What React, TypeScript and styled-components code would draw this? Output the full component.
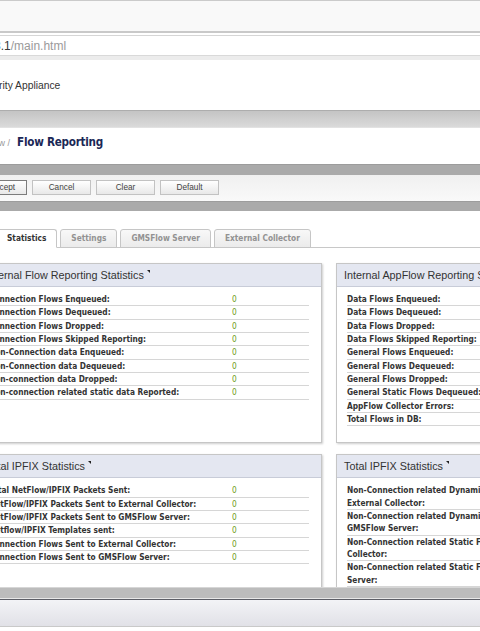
import React from "react";
import styled, { createGlobalStyle } from "styled-components";

interface Stat {
  label: string;
  value: string;
}

interface PanelData {
  title: string;
  stats: Array<Stat>;
}

const zeros = (labels: Array<string>): Array<Stat> =>
  labels.map(label => ({ label, value: "0" }));

const panels: Array<PanelData> = [
  {
    title: "Internal Flow Reporting Statistics",
    stats: zeros([
      "Connection Flows Enqueued:",
      "Connection Flows Dequeued:",
      "Connection Flows Dropped:",
      "Connection Flows Skipped Reporting:",
      "Non-Connection data Enqueued:",
      "Non-Connection data Dequeued:",
      "Non-connection data Dropped:",
      "Non-connection related static data Reported:"
    ])
  },
  {
    title: "Internal AppFlow Reporting Statistics",
    stats: zeros([
      "Data Flows Enqueued:",
      "Data Flows Dequeued:",
      "Data Flows Dropped:",
      "Data Flows Skipped Reporting:",
      "General Flows Enqueued:",
      "General Flows Dequeued:",
      "General Flows Dropped:",
      "General Static Flows Dequeued:",
      "AppFlow Collector Errors:",
      "Total Flows in DB:"
    ])
  },
  {
    title: "Total IPFIX Statistics",
    stats: zeros([
      "Total NetFlow/IPFIX Packets Sent:",
      "NetFlow/IPFIX Packets Sent to External Collector:",
      "NetFlow/IPFIX Packets Sent to GMSFlow Server:",
      "Netflow/IPFIX Templates sent:",
      "Connection Flows Sent to External Collector:",
      "Connection Flows Sent to GMSFlow Server:"
    ])
  },
  {
    title: "Total IPFIX Statistics",
    stats: zeros([
      "Non-Connection related Dynamic Flows Sent to\nExternal Collector:",
      "Non-Connection related Dynamic Flows Sent to\nGMSFlow Server:",
      "Non-Connection related Static Flows Sent to External\nCollector:",
      "Non-Connection related Static Flows Sent to GMSFlow\nServer:",
      "Non-Connection related Flows Sent to\nExternal Collector:"
    ])
  }
];

const tabs = ["Statistics", "Settings", "GMSFlow Server", "External Collector"];
const buttons = ["Accept", "Cancel", "Clear", "Default"];

const StatPanel = ({ title, stats }: PanelData) => (
  <Panel>
    <PanelHeader>
      {title}
      <Corner />
    </PanelHeader>
    <StatTable>
      {stats.map((s, i) => (
        <StatRow key={i}>
          <Label>{s.label}</Label>
          <Value>{s.value}</Value>
        </StatRow>
      ))}
    </StatTable>
  </Panel>
);

export default function App() {
  return (
    <>
      <GlobalStyle />
      <Viewport>
        <BrowserTop />
        <UrlBar>
          <UrlText>
            <Host>192.168.168.1</Host>
            <Path>/main.html</Path>
          </UrlText>
        </UrlBar>
        <AppHeader>
          <Product>Network Security Appliance</Product>
        </AppHeader>
        <NavBar />
        <TitleArea>
          <Crumb>AppFlow /</Crumb>
          <PageTitle>Flow Reporting</PageTitle>
        </TitleArea>
        <DarkBar $h={11} />
        <ButtonStrip>
          {buttons.map((b, i) => (
            <Button key={b} $primary={i === 0}>
              {b}
            </Button>
          ))}
        </ButtonStrip>
        <DarkBar $h={10} />
        <Content>
          <TabBar>
            {tabs.map((t, i) => (
              <Tab key={t} $active={i === 0}>
                {t}
              </Tab>
            ))}
          </TabBar>
          <PanelGrid>
            {panels.map((p, i) => (
              <StatPanel key={i} title={p.title} stats={p.stats} />
            ))}
          </PanelGrid>
        </Content>
        <GreyBand />
        <Footer />
      </Viewport>
    </>
  );
}

const GlobalStyle = createGlobalStyle`
  body {
    margin: 0;
    background: #fff;
    overflow: hidden;
  }
`;

const Viewport = styled.div`
  width: 480px;
  height: 631px;
  overflow: hidden;
  background: #fff;
  font-family: "Liberation Sans", Arial, sans-serif;
`;

const BrowserTop = styled.div`
  height: 30px;
  background: #f9f9f9;
  border-top: 1px solid #cbcbcb;
  border-bottom: 2px solid #c9c9c9;
  margin-bottom: 2px;
`;

const UrlBar = styled.div`
  height: 19px;
  border-top: 1px solid #d6d6d6;
  border-bottom: 1px solid #d9d9d9;
  display: flex;
  align-items: center;
  white-space: nowrap;
`;

const UrlText = styled.div`
  margin-left: -66px;
  font-size: 12px;
`;

const Host = styled.span`
  color: #3a3a3a;
`;

const Path = styled.span`
  color: #9a9a9a;
`;

const AppHeader = styled.div`
  height: 50px;
  border-top: 4px solid #ececec;
  display: flex;
  align-items: center;
  white-space: nowrap;
`;

const Product = styled.div`
  margin-left: -65px;
  font-size: 10.3px;
  color: #333;
`;

const NavBar = styled.div`
  height: 16px;
  border-top: 1px solid #adadad;
  border-bottom: 1px solid #e2e2e2;
  background: linear-gradient(#c4c4c4, #dadada);
`;

const TitleArea = styled.div`
  height: 29px;
  padding-top: 7px;
  margin-left: -30px;
  display: flex;
  align-items: baseline;
  white-space: nowrap;
  line-height: 14px;
`;

const Crumb = styled.span`
  font-size: 9px;
  color: #999;
  margin-right: 7px;
`;

const PageTitle = styled.span`
  font-family: "DejaVu Sans Condensed", "DejaVu Sans", sans-serif;
  font-weight: bold;
  font-size: 11.6px;
  letter-spacing: -0.25px;
  color: #1b2856;
`;

const DarkBar = styled.div<{ $h: number }>`
  height: ${p => p.$h - 1}px;
  border-top: 1px solid #9c9c9c;
  background: #aaaaaa;
`;

const ButtonStrip = styled.div`
  height: 21px;
  padding-top: 5px;
  margin-left: -22px;
  display: flex;
  gap: 5px;
  background: linear-gradient(#f0f0f0, #f9f9f9);
`;

const Button = styled.div<{ $primary: boolean }>`
  box-sizing: border-box;
  width: ${p => (p.$primary ? 49 : 59)}px;
  height: 15px;
  border: 1px solid ${p => (p.$primary ? "#7c7c7c" : "#c2c2c2")};
  background: linear-gradient(#ffffff, #e8e8e8);
  font-size: 8.25px;
  line-height: 13px;
  color: #444;
  text-align: center;
`;

const Content = styled.div`
  height: 358px;
  padding-top: 18px;
  margin-left: -22px;
  overflow: hidden;
`;

const TabBar = styled.div`
  display: flex;
  gap: 3px;
  padding-left: 18px;
  border-bottom: 1px solid #c8c8c8;
`;

const Tab = styled.div<{ $active: boolean }>`
  height: 17px;
  padding: 0 10px;
  margin-bottom: -1px;
  border: 1px solid #c6c6c6;
  border-bottom: 1px solid ${p => (p.$active ? "#fff" : "#c6c6c6")};
  border-radius: 3px 3px 0 0;
  background: ${p =>
    p.$active ? "#fff" : "linear-gradient(#f8f8f8, #ebebeb)"};
  font-family: "DejaVu Sans Condensed", "DejaVu Sans", sans-serif;
  font-weight: bold;
  font-size: 8.25px;
  line-height: 17px;
  color: ${p => (p.$active ? "#333" : "#929292")};
  white-space: nowrap;
`;

const PanelGrid = styled.div`
  margin-top: 15px;
  display: grid;
  grid-template-columns: 344px 344px;
  column-gap: 14px;
  row-gap: 11px;
`;

const Panel = styled.div`
  border: 1px solid #c6c6c6;
  box-shadow: 1px 1px 2px rgba(0, 0, 0, 0.2);
  background: #fff;
  padding-bottom: 16px;
`;

const PanelHeader = styled.div`
  height: 22px;
  line-height: 22px;
  padding-left: 7px;
  border-bottom: 1px solid #c8ccd8;
  background: #e4e7f1;
  font-size: 10.8px;
  color: #333;
  white-space: nowrap;
`;

const Corner = styled.span`
  display: inline-block;
  width: 0;
  height: 0;
  margin-left: 3px;
  vertical-align: top;
  margin-top: 6px;
  border-top: 3px solid #222;
  border-left: 3px solid transparent;
`;

const StatTable = styled.div`
  margin: 6px 12px 0 10px;
`;

const StatRow = styled.div`
  display: grid;
  grid-template-columns: 243px 1fr;
  border-bottom: 1px solid #d6d6d6;
  line-height: 12.33px;
  font-family: "DejaVu Sans Condensed", "DejaVu Sans", sans-serif;
  font-size: 8.25px;
`;

const Label = styled.div`
  font-weight: bold;
  color: #333;
  white-space: pre-line;
`;

const Value = styled.div`
  color: #6f9c22;
`;

const GreyBand = styled.div`
  height: 10px;
  border-top: 1px solid #d6d6d6;
  background: #bcbcbc;
`;

const Footer = styled.div`
  height: 26px;
  border-top: 1px solid #e8e8e8;
  box-shadow: inset 0 1px 0 #5c5e66;
  padding-top: 1px;
  border-bottom: 1px solid #c9c9c9;
  background: linear-gradient(#f3f4f7, #e1e1e7);
`;
